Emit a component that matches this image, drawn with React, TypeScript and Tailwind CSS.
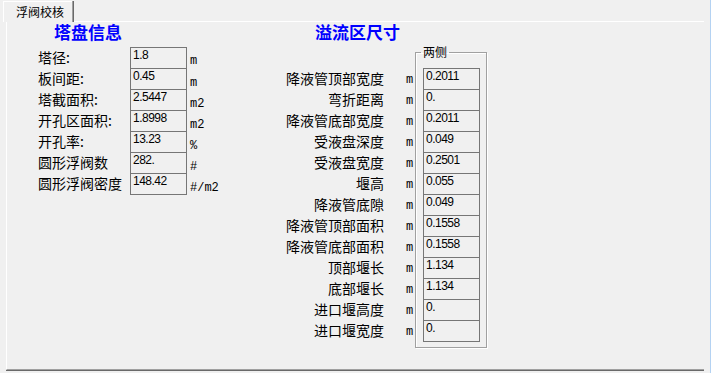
type Row = { label: string; value: string; unit?: string }

const towerRows: Row[] = [
  { label: '塔径:', value: '1.8', unit: 'm' },
  { label: '板间距:', value: '0.45', unit: 'm' },
  { label: '塔截面积:', value: '2.5447', unit: 'm2' },
  { label: '开孔区面积:', value: '1.8998', unit: 'm2' },
  { label: '开孔率:', value: '13.23', unit: '%' },
  { label: '圆形浮阀数', value: '282.', unit: '#' },
  { label: '圆形浮阀密度', value: '148.42', unit: '#/m2' },
]

const weirRows: Row[] = [
  { label: '降液管顶部宽度', value: '0.2011' },
  { label: '弯折距离', value: '0.' },
  { label: '降液管底部宽度', value: '0.2011' },
  { label: '受液盘深度', value: '0.049' },
  { label: '受液盘宽度', value: '0.2501' },
  { label: '堰高', value: '0.055' },
  { label: '降液管底隙', value: '0.049' },
  { label: '降液管顶部面积', value: '0.1558' },
  { label: '降液管底部面积', value: '0.1558' },
  { label: '顶部堰长', value: '1.134' },
  { label: '底部堰长', value: '1.134' },
  { label: '进口堰高度', value: '0.' },
  { label: '进口堰宽度', value: '0.' },
]

const cjk = "font-['Noto_Sans_CJK_SC',sans-serif]"
const mono = "font-['Liberation_Mono',monospace]"

function ValueBox({ value, first }: { value: string; first: boolean }) {
  return (
    <div
      className={`h-[22px] w-[57px] border border-[#767676] pl-[2px] pt-[1px] font-['Liberation_Sans',sans-serif] text-[12px] leading-[12px] tracking-[-0.5px] text-black ${
        first ? '' : '-mt-px'
      }`}
    >
      {value}
    </div>
  )
}

export default function App() {
  return (
    <div className="flex h-[373px] w-[711px] overflow-hidden bg-[#f0f0f0] text-black">
      <div className="w-[710px]">
        {/* tab strip */}
        <div className="flex h-[22px] items-end">
          <div
            className={`ml-[3px] flex h-[21px] w-[69px] items-center border-l border-t border-white pl-[12px] ${cjk} text-[12px] shadow-[1px_0_0_#a0a0a0,2px_0_0_#696969]`}
          >
            浮阀校核
          </div>
          <div className="ml-[2px] mr-[6px] flex-1 border-b border-white" />
        </div>

        {/* panel */}
        <div className="ml-[6px] flex h-[348px] w-[698px] border-b border-l border-b-[#a0a0a0] border-l-white pl-[31px] shadow-[0_1px_0_#696969]">
          {/* tower info */}
          <div className="w-[226px]">
            <h2 className={`ml-[16px] ${cjk} text-[17px] font-bold leading-[20px] text-[#0000ff]`}>
              塔盘信息
            </h2>
            <div className="mt-[5px]">
              {towerRows.map((r, i) => (
                <div key={r.label} className="flex items-center">
                  <div className={`w-[92px] ${cjk} text-[14px] leading-[16px] ${i ? '-mt-px' : ''} -translate-y-[1px]`}>
                    {r.label}
                  </div>
                  <ValueBox value={r.value} first={i === 0} />
                  <div className={`ml-[3px] mt-[6px] ${mono} text-[12px] leading-[12px]`}>{r.unit}</div>
                </div>
              ))}
            </div>
          </div>

          {/* overflow zone */}
          <div>
            <h2 className={`ml-[51px] ${cjk} text-[17px] font-bold leading-[20px] text-[#0000ff]`}>
              溢流区尺寸
            </h2>
            <div className="flex items-start">
              <div className="mt-[26px] w-[120px]">
                {weirRows.map((r) => (
                  <div
                    key={r.label}
                    className={`flex h-[21px] items-center justify-end ${cjk} text-[14px] leading-[16px]`}
                  >
                    <span className="-translate-y-[1px]">{r.label}</span>
                  </div>
                ))}
              </div>
              <div className="mt-[26px] w-[31px] pl-[22px]">
                {weirRows.map((r) => (
                  <div key={r.label} className={`flex h-[21px] items-center pt-[3px] ${mono} text-[12px] leading-[12px]`}>
                    m
                  </div>
                ))}
              </div>
              <fieldset className="mt-[3px] w-[72px] border border-[#a0a0a0] pb-[5px] pl-[7px] shadow-[inset_1px_1px_0_#fff,1px_1px_0_#fff]">
                <legend className={`-ml-[2px] px-[2px] ${cjk} text-[12px] leading-[14px]`}>两侧</legend>
                <div className="pt-[9px]">
                  {weirRows.map((r, i) => (
                    <ValueBox key={r.label} value={r.value} first={i === 0} />
                  ))}
                </div>
              </fieldset>
            </div>
          </div>
        </div>
      </div>
      <div className="h-full w-px bg-[#b4d2f2]" />
    </div>
  )
}
